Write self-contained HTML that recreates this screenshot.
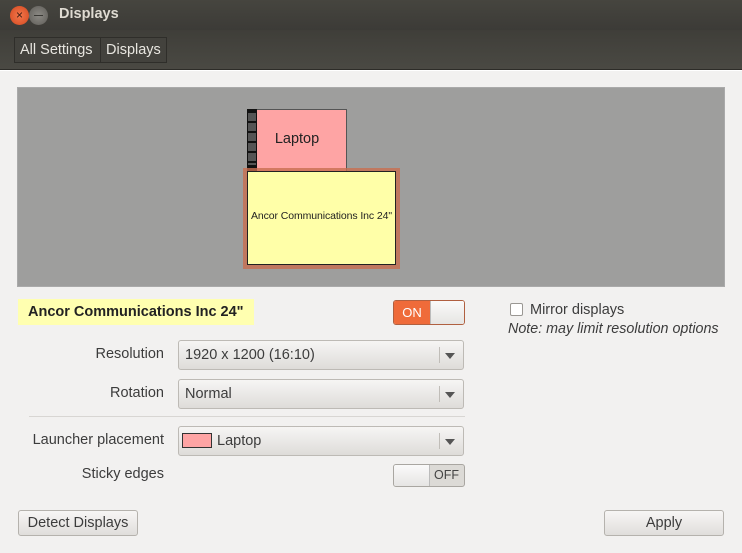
<!DOCTYPE html>
<html><head><style>
*{box-sizing:border-box;margin:0;padding:0}
body{width:742px;height:553px;background:#f2f1f0;font-family:"Liberation Sans",sans-serif;font-size:14px;color:#3c3c3c;position:relative;overflow:hidden}
.a{position:absolute}
.title{left:0;top:0;width:742px;height:30px;background:linear-gradient(#46453f,#3c3b37);}
.tb{left:0;top:30px;width:742px;height:40px;background:linear-gradient(#3f3e39,#4a4943);border-bottom:1px solid #2d2c28}
.crumb{top:37px;height:26px;border:1px solid #2f2e2a;background:#43423d;color:#e8e6e0;font-size:14.5px;line-height:24px;padding:0 5px}
.combo{height:30px;border:1px solid #bdbab5;border-radius:3px;background:linear-gradient(#f6f5f4,#dedcd9);line-height:28px;padding-left:6px;color:#3c3c3c}
.combo:after{content:"";position:absolute;right:8px;top:12px;border-left:5px solid transparent;border-right:5px solid transparent;border-top:6px solid #555}
.combo:before{content:"";position:absolute;right:23px;top:6px;height:16px;border-left:1px solid #c0bdb8}
.lbl{text-align:right;width:150px;left:14px}
.btn{height:26px;border:1px solid #b5b2ad;border-radius:3px;background:linear-gradient(#f7f6f5,#e0dedb);text-align:center;line-height:24px}
</style></head><body>
<div class="a title"></div>
<div class="a" style="left:10px;top:6px;width:19px;height:19px;border-radius:50%;background:radial-gradient(#f3774c,#d3481f);color:#3a1a10;font-size:12px;text-align:center;line-height:19px">×</div>
<div class="a" style="left:29px;top:6px;width:19px;height:19px;border-radius:50%;background:radial-gradient(#8c8a85,#5e5c57)"><div class="a" style="left:5px;top:9px;width:9px;height:1px;background:#3a3935"></div></div>
<div class="a" style="left:59px;top:6px;color:#dfdbd2;font-weight:bold;font-size:14.5px">Displays</div>
<div class="a tb"></div>
<div class="a crumb" style="left:14px;width:87px">All Settings</div>
<div class="a crumb" style="left:100px;width:67px">Displays</div>
<div class="a" style="left:0;top:70px;width:742px;height:1px;background:#fff"></div>

<div class="a" style="left:17px;top:87px;width:708px;height:200px;background:#9e9e9d;border:1px solid #aaa"></div>
<div class="a" style="left:247px;top:109px;width:100px;height:63px;background:#fea4a4;border:1px solid #555"></div>
<div class="a" style="left:247px;top:109px;width:10px;height:63px;background:#111"></div>
<div class="a" style="left:248px;top:113px;width:8px;height:52px;background:repeating-linear-gradient(#555 0 8px,#111 8px 10px)"></div>
<div class="a" style="left:247px;top:131px;width:100px;text-align:center;font-size:14.5px;color:#222">Laptop</div>
<div class="a" style="left:243px;top:168px;width:157px;height:101px;background:rgba(200,110,80,.8)"></div>
<div class="a" style="left:247px;top:171px;width:149px;height:94px;background:#ffffa8;border:1px solid #222"></div>
<div class="a" style="left:247px;top:210px;width:149px;text-align:center;font-size:10.5px;color:#222;letter-spacing:-.1px">Ancor Communications Inc 24"</div>

<div class="a" style="left:18px;top:299px;width:236px;height:26px;background:#ffffb0;font-weight:bold;color:#222;line-height:26px;padding-left:10px;font-size:14.5px">Ancor Communications Inc 24"</div>
<div class="a" style="left:393px;top:300px;width:72px;height:25px;border:1px solid #b06040;border-radius:3px;background:#fff;overflow:hidden"><div class="a" style="left:0;top:0;width:36px;height:23px;background:#ef6b3a;color:#fff;font-size:13px;text-align:center;line-height:23px">ON</div><div class="a" style="left:36px;top:0;width:34px;height:23px;background:linear-gradient(#fafafa,#e6e5e3);border-left:1px solid #bbb"></div></div>
<div class="a" style="left:510px;top:303px;width:13px;height:13px;border:1px solid #9a9793;border-radius:2px;background:#fff"></div>
<div class="a" style="left:530px;top:302px;font-size:14.5px">Mirror displays</div>
<div class="a" style="left:508px;top:321px;font-style:italic;font-size:14.3px">Note: may limit resolution options</div>

<div class="a lbl" style="top:346px;font-size:14.5px">Resolution</div>
<div class="a combo" style="left:178px;top:340px;width:286px;font-size:14.5px">1920 x 1200 (16:10)</div>
<div class="a lbl" style="top:385px;font-size:14.5px">Rotation</div>
<div class="a combo" style="left:178px;top:379px;width:286px;font-size:14.5px">Normal</div>
<div class="a" style="left:29px;top:416px;width:436px;height:1px;background:#d8d6d3"></div>
<div class="a lbl" style="top:432px;font-size:14.5px">Launcher placement</div>
<div class="a combo" style="left:178px;top:426px;width:286px;padding-left:38px;font-size:14.5px">Laptop</div>
<div class="a" style="left:182px;top:433px;width:30px;height:15px;background:#fea4a4;border:1px solid #333"></div>
<div class="a lbl" style="top:466px;font-size:14.5px">Sticky edges</div>
<div class="a" style="left:393px;top:464px;width:72px;height:23px;border:1px solid #a9a6a1;border-radius:3px;background:#dcdad6;overflow:hidden"><div class="a" style="left:0;top:0;width:36px;height:21px;background:linear-gradient(#fafafa,#e6e5e3);border-right:1px solid #bbb"></div><div class="a" style="left:40px;top:3px;font-size:12.5px;color:#444">OFF</div></div>

<div class="a btn" style="left:18px;top:510px;width:120px;font-size:14.5px">Detect Displays</div>
<div class="a btn" style="left:604px;top:510px;width:120px;font-size:14.5px">Apply</div>
</body></html>
